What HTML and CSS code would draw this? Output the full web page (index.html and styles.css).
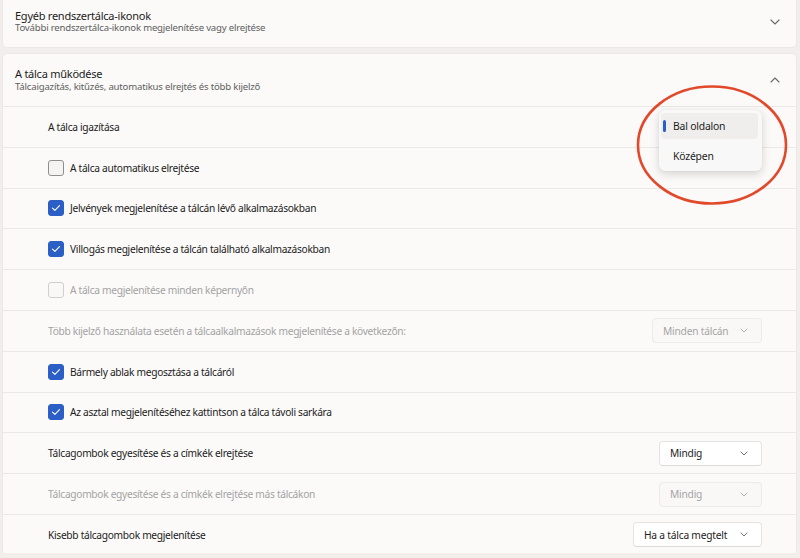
FILE: index.html
```html
<!DOCTYPE html>
<html lang="hu">
<head>
<meta charset="utf-8">
<title>Tálca viselkedése</title>
<link rel="stylesheet" href="styles.css">
</head>
<body>
<div class="page">
  <section class="card card-first">
    <div class="card-head">
      <div class="head-text">
        <div class="title">Egyéb rendszertálca-ikonok</div>
        <div class="subtitle">További rendszertálca-ikonok megjelenítése vagy elrejtése</div>
      </div>
      <svg class="chev" width="10" height="6" viewBox="0 0 10 6"><path d="M1 1 L5 5 L9 1" fill="none" stroke="#6b6b6b" stroke-width="1.1" stroke-linecap="round" stroke-linejoin="round"/></svg>
    </div>
  </section>

  <section class="card card-main">
    <div class="card-head">
      <div class="head-text">
        <div class="title">A tálca működése</div>
        <div class="subtitle">Tálcaigazítás, kitűzés, automatikus elrejtés és több kijelző</div>
      </div>
      <svg class="chev" width="10" height="6" viewBox="0 0 10 6"><path d="M1 5 L5 1 L9 5" fill="none" stroke="#6b6b6b" stroke-width="1.1" stroke-linecap="round" stroke-linejoin="round"/></svg>
    </div>

    <div class="row">
      <span class="label">A tálca igazítása</span>
    </div>
    <div class="row">
      <span class="cb"></span><span class="label">A tálca automatikus elrejtése</span>
    </div>
    <div class="row">
      <span class="cb checked"><svg width="10" height="8" viewBox="0 0 10 8"><path d="M1.5 4.2 L3.9 6.4 L8.5 1.6" fill="none" stroke="#fff" stroke-width="1.1" stroke-linecap="round" stroke-linejoin="round"/></svg></span><span class="label">Jelvények megjelenítése a tálcán lévő alkalmazásokban</span>
    </div>
    <div class="row">
      <span class="cb checked"><svg width="10" height="8" viewBox="0 0 10 8"><path d="M1.5 4.2 L3.9 6.4 L8.5 1.6" fill="none" stroke="#fff" stroke-width="1.1" stroke-linecap="round" stroke-linejoin="round"/></svg></span><span class="label">Villogás megjelenítése a tálcán található alkalmazásokban</span>
    </div>
    <div class="row">
      <span class="cb disabled"></span><span class="label dis">A tálca megjelenítése minden képernyőn</span>
    </div>
    <div class="row">
      <span class="label dis">Több kijelző használata esetén a tálcaalkalmazások megjelenítése a következőn:</span>
      <span class="dd dd-dis dd-w110"><span>Minden tálcán</span><svg width="8" height="5" viewBox="0 0 8 5"><path d="M1 1 L4 4 L7 1" fill="none" stroke="#b0b0b0" stroke-width="1" stroke-linecap="round"/></svg></span>
    </div>
    <div class="row">
      <span class="cb checked"><svg width="10" height="8" viewBox="0 0 10 8"><path d="M1.5 4.2 L3.9 6.4 L8.5 1.6" fill="none" stroke="#fff" stroke-width="1.1" stroke-linecap="round" stroke-linejoin="round"/></svg></span><span class="label">Bármely ablak megosztása a tálcáról</span>
    </div>
    <div class="row">
      <span class="cb checked"><svg width="10" height="8" viewBox="0 0 10 8"><path d="M1.5 4.2 L3.9 6.4 L8.5 1.6" fill="none" stroke="#fff" stroke-width="1.1" stroke-linecap="round" stroke-linejoin="round"/></svg></span><span class="label">Az asztal megjelenítéséhez kattintson a tálca távoli sarkára</span>
    </div>
    <div class="row">
      <span class="label">Tálcagombok egyesítése és a címkék elrejtése</span>
      <span class="dd dd-w103"><span>Mindig</span><svg width="8" height="5" viewBox="0 0 8 5"><path d="M1 1 L4 4 L7 1" fill="none" stroke="#707070" stroke-width="1" stroke-linecap="round"/></svg></span>
    </div>
    <div class="row">
      <span class="label dis">Tálcagombok egyesítése és a címkék elrejtése más tálcákon</span>
      <span class="dd dd-dis dd-w103"><span>Mindig</span><svg width="8" height="5" viewBox="0 0 8 5"><path d="M1 1 L4 4 L7 1" fill="none" stroke="#b0b0b0" stroke-width="1" stroke-linecap="round"/></svg></span>
    </div>
    <div class="row">
      <span class="label">Kisebb tálcagombok megjelenítése</span>
      <span class="dd dd-w129"><span>Ha a tálca megtelt</span><svg width="8" height="5" viewBox="0 0 8 5"><path d="M1 1 L4 4 L7 1" fill="none" stroke="#707070" stroke-width="1" stroke-linecap="round"/></svg></span>
    </div>

    <div class="menu">
      <div class="menu-item active"><span class="bar"></span>Bal oldalon</div>
      <div class="menu-item">Középen</div>
    </div>
  </section>

  <svg class="ring" width="160" height="128" viewBox="0 0 160 128"><ellipse cx="80" cy="64" rx="74" ry="58.5" fill="none" stroke="#e2492b" stroke-width="2.6"/></svg>
</div>
</body>
</html>
```

FILE: styles.css
```css
* { box-sizing: border-box; }
html, body {
  margin: 0;
  padding: 0;
  background: #f2eeeb;
  font-family: "Noto Sans", "Open Sans", sans-serif;
  color: #1c1c1c;
  overflow: hidden;
}
.page {
  position: relative;
  width: 800px;
  height: 558px;
  padding: 0 3px 0 2px;
  margin-top: -5px;
}
.card {
  background: #fbfaf9;
  border: 1px solid #ebe8e5;
  border-radius: 5px;
}
.card-first {
  margin-bottom: 5px;
}
.card-main {
  position: relative;
}
.card-head {
  display: flex;
  align-items: center;
  justify-content: space-between;
  height: 52px;
  padding: 0 16px 0 12px;
}
.card-first .card-head { height: 51px; }
.title {
  font-size: 11px;
  letter-spacing: -0.25px;
  line-height: 13.5px;
  color: #1c1c1c;
}
.subtitle {
  font-size: 9.6px;
  letter-spacing: -0.2px;
  line-height: 12px;
  color: #606060;
}
.chev { display: block; }
.row {
  display: flex;
  align-items: center;
  height: 40.8px;
  border-top: 1px solid #ebe9e6;
  padding: 0 34px 0 45px;
}
.label {
  font-size: 10.2px;
  letter-spacing: -0.3px;
  color: #1c1c1c;
  flex: 1;
  white-space: nowrap;
}
.label.dis { color: #a3a3a3; }
.cb {
  width: 16px;
  height: 16px;
  border-radius: 3px;
  border: 1px solid #8f8f8f;
  background: #f5f4f3;
  margin-right: 6px;
  display: flex;
  align-items: center;
  justify-content: center;
  flex: none;
}
.cb.checked {
  background: #2c5fc5;
  border-color: #2c5fc5;
}
.cb.disabled {
  border-color: #cfcfcf;
  background: #f9f8f7;
}
.dd {
  height: 25px;
  display: flex;
  align-items: center;
  justify-content: space-between;
  padding: 0 13px 0 10px;
  background: #ffffff;
  border: 1px solid #e6e4e2;
  border-bottom-color: #dcdad8;
  border-radius: 4px;
  font-size: 10.2px;
  letter-spacing: -0.2px;
  color: #1c1c1c;
  flex: none;
}
.dd-dis {
  background: #f9f8f7;
  border-color: #ecebea;
  color: #a5a5a5;
}
.dd-w110 { width: 110px; }
.dd-w103 { width: 103px; }
.dd-w129 { width: 129px; }
.menu {
  position: absolute;
  left: 656px;
  top: 56px;
  width: 103px;
  height: 61px;
  background: #f9f8f8;
  border-radius: 6px;
  box-shadow: 0 3px 10px rgba(0,0,0,0.16), 0 0 1px rgba(0,0,0,0.12);
  padding: 3px 4px 3px 2px;
}
.menu-item {
  position: relative;
  height: 26px;
  display: flex;
  align-items: center;
  padding-left: 12px;
  border-radius: 4px;
  font-size: 10.4px;
  letter-spacing: -0.2px;
  color: #1c1c1c;
}
.menu-item + .menu-item { margin-top: 4px; }
.menu-item.active { background: #efeeed; }
.bar {
  position: absolute;
  left: 2px;
  top: 7px;
  width: 2.5px;
  height: 12px;
  border-radius: 2px;
  background: #2c5fc5;
}
.ring {
  position: absolute;
  left: 632px;
  top: 86px;
}
```
